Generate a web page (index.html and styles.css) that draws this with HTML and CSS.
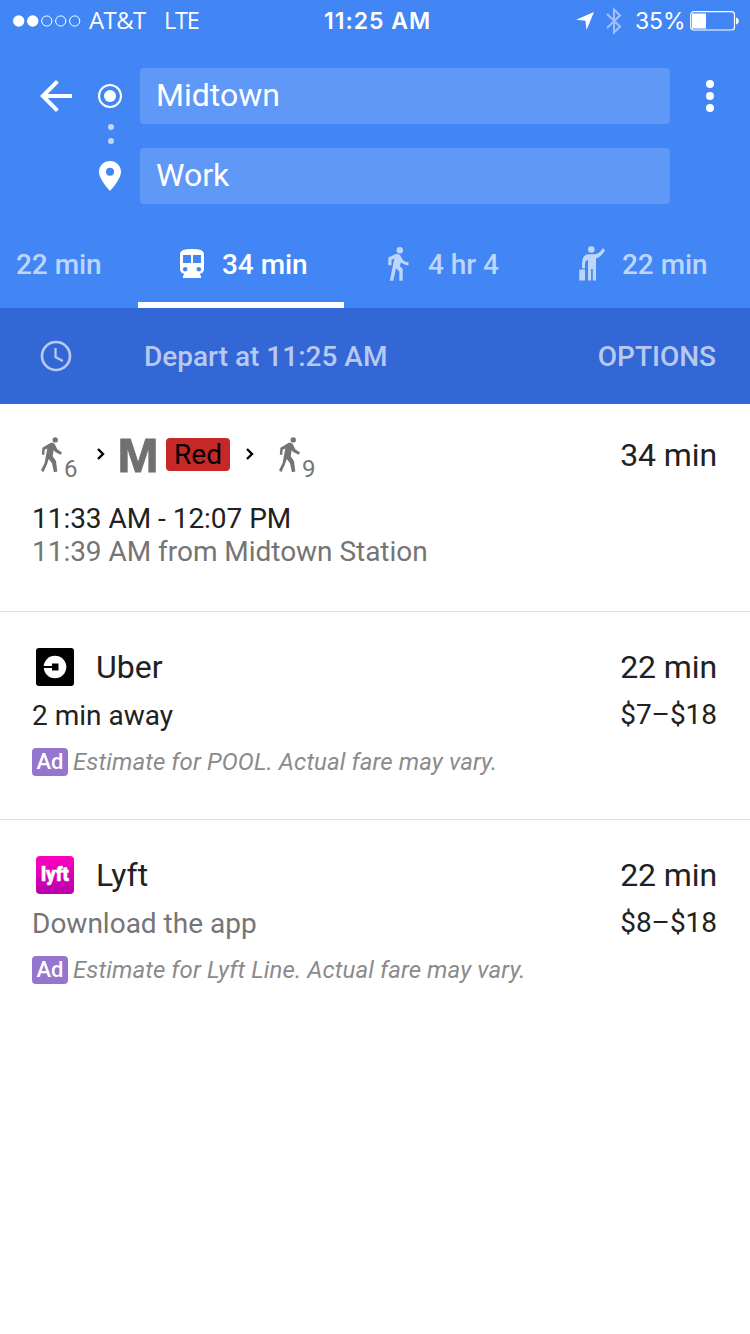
FILE: index.html
```html
<!DOCTYPE html>
<html lang="en">
<head>
<meta charset="utf-8">
<title>Directions</title>
<link rel="stylesheet" href="styles.css">
</head>
<body>
<svg class="defs" width="0" height="0">
  <symbol id="walk" viewBox="0 0 21 36">
    <circle cx="14.200" cy="2.900" r="2.700"/>
    <path d="M9 6.300C10.500 5.400 13 5.900 13.800 7.300L16.300 12.300 21 15.500 19.800 17.700 14.600 15.300 12.700 13.200 11.700 19.200 15 24 16.300 34.500 12.900 35.200 11 26.300 7.700 22 6 27.300 2.400 35.200 0 33.200 3.600 26 6.300 11.500 3.700 12.800 3.300 18 .8 17.500 1.400 10.800Z"/>
  </symbol>
</svg>
<header class="header">
  <div class="status">
    <svg class="signal" width="68" height="12" viewBox="0 0 68 12">
      <g fill="#fff"><circle cx="5.700" cy="6" r="5.700"/><circle cx="19.700" cy="6" r="5.700"/></g>
      <g fill="none" stroke="#fff" stroke-width="1"><circle cx="33.800" cy="6" r="5.100"/><circle cx="47.700" cy="6" r="5.100"/><circle cx="61.700" cy="6" r="5.100"/></g>
    </svg>
    <span class="carrier">AT&amp;T</span>
    <span class="network">LTE</span>
    <span class="time">11:25 AM</span>
    <svg class="location" width="18" height="18" viewBox="0 0 18 18"><path fill="#fff" d="M18 0 10.500 18 9.500 8.800 0 7.700Z"/></svg>
    <svg class="bluetooth" width="16" height="28" viewBox="0 0 16 28"><path fill="none" stroke="#a0c2fa" stroke-width="2" d="M1 7 14 19.500 8 25.500V2.500L14 8.500 1 21"/></svg>
    <span class="percent">35%</span>
    <svg class="battery" width="49" height="20" viewBox="0 0 49 20"><rect x=".7" y=".7" width="43.800" height="18.300" rx="3" fill="none" stroke="#fff" stroke-width="1.200"/><path fill="#fff" d="M2 2.500H16V17.500H2ZM46 6.500C49.700 7 49.700 13 46 13.500Z"/></svg>
  </div>

  <div class="route">
    <svg class="back" width="32" height="32" viewBox="0 0 32 32"><path fill="none" stroke="#fff" stroke-width="4" d="M17.400 1.400 2.800 16 17.400 30.600M2.800 16H32"/></svg>
    <div class="endpoints">
      <svg width="24" height="24" viewBox="0 0 24 24"><circle cx="12" cy="12" r="11" fill="none" stroke="#fff" stroke-width="2"/><circle cx="12" cy="12" r="6" fill="#fff"/></svg>
      <svg class="link-dots" width="8" height="20" viewBox="0 0 8 20"><g fill="#c0d6fc"><circle cx="4" cy="3" r="3"/><circle cx="4" cy="17" r="3"/></g></svg>
      <svg class="pin" width="22" height="30" viewBox="0 0 22 30"><path fill="#fff" fill-rule="evenodd" d="M11 0C4.900 0 0 4.800 0 10.800 0 18.500 11 30 11 30S22 18.500 22 10.800C22 4.800 17.100 0 11 0ZM11 6.700A4 4 0 1 1 11 14.700 4 4 0 0 1 11 6.700Z"/></svg>
    </div>
    <div class="fields">
      <div class="field origin">Midtown</div>
      <div class="field destination">Work</div>
    </div>
    <svg class="more" width="8" height="32" viewBox="0 0 8 32"><g fill="#fff"><circle cx="4" cy="4" r="4"/><circle cx="4" cy="16" r="4"/><circle cx="4" cy="28" r="4"/></g></svg>
  </div>

  <nav class="tabs">
    <div class="tab tab-drive"><span>22 min</span></div>
    <div class="tab tab-transit active">
      <svg width="24" height="29" viewBox="0 0 24 29"><path fill="currentColor" fill-rule="evenodd" d="M0 5.500C0 1 5 0 12 0S24 1 24 5.500V19.500A5.500 5.500 0 0 1 19.500 25L21 27V29H3V27L4.500 25A5.500 5.500 0 0 1 0 19.500ZM3 6H11V14H3ZM13 6H21V14H13ZM5.200 17.900A2.300 2.300 0 1 0 5.200 22.500 2.300 2.300 0 0 0 5.200 17.900ZM18.800 17.900A2.300 2.300 0 1 0 18.800 22.500 2.300 2.300 0 0 0 18.800 17.900Z"/></svg>
      <span>34 min</span>
    </div>
    <div class="tab tab-walk">
      <svg width="21" height="34" viewBox="0 0 21 34"><circle cx="11.800" cy="3.200" r="3.200" fill="currentColor"/><path fill="currentColor" d="M7.300 7.300C9 6.600 11.300 7 12.300 8.500L15 13.300C16.200 14.300 18 15 20.500 15.300V18.400C17 18 14.500 16.800 13 15.200L11.900 19 14.700 22V33.700H11.300V24.500L8 21.300 5.300 33.700H1.800L6.400 11.500 3.500 12.700V18.300H.3V10.500Z"/></svg>
      <span>4 hr 4</span>
    </div>
    <div class="tab tab-ride">
      <svg width="26" height="35" viewBox="0 0 26 35"><circle cx="12.300" cy="3.500" r="3.300" fill="currentColor"/><path fill="currentColor" d="M9 8.300H16C19.500 8 22 5 24 2L26 4.500C23.500 8.500 21 11 17 12.500V34.500H13.800V23H12.100V34.500H9V14C6.500 14.500 6 16 6 21H3C3 13 4 9 9 8.300ZM.3 23.500H6V34.500H.3ZM3 20.500H6V22.200H3Z"/></svg>
      <span>22 min</span>
    </div>
  </nav>
</header>

<div class="depart-bar">
  <svg width="32" height="32" viewBox="0 0 32 32"><g fill="none" stroke="currentColor"><circle cx="16" cy="16" r="14" stroke-width="2.700"/><path stroke-width="2.300" d="M15.500 8V17L22.800 21"/></g></svg>
  <span class="depart">Depart at 11:25 AM</span>
  <span class="options">OPTIONS</span>
</div>

<main>
  <section class="result transit">
    <div class="steps">
      <svg class="walker" width="21" height="36" viewBox="0 0 21 36"><use href="#walk"/></svg>
      <span class="minutes">6</span>
      <svg class="chevron" width="8" height="12" viewBox="0 0 8 12"><path d="M1 1 6 6 1 11"/></svg>
      <svg class="metro" width="44" height="56" viewBox="0 0 44 56"><text x="1.500" y="45" textLength="41" lengthAdjust="spacingAndGlyphs">M</text></svg>
      <span class="line">Red</span>
      <svg class="chevron second" width="8" height="12" viewBox="0 0 8 12"><path d="M1 1 6 6 1 11"/></svg>
      <svg class="walker last" width="21" height="36" viewBox="0 0 21 36"><use href="#walk"/></svg>
      <span class="minutes">9</span>
      <span class="duration">34 min</span>
    </div>
    <div class="schedule">11:33 AM - 12:07 PM</div>
    <div class="station">11:39 AM from Midtown Station</div>
  </section>

  <section class="result service">
    <div class="title-row">
      <svg class="logo" width="38" height="38" viewBox="0 0 38 38"><rect width="38" height="38" rx="3"/><circle cx="19" cy="19" r="11.300" fill="#fff"/><path d="M7 18H16V15.500H22.500V22.500H16V20H7Z"/></svg>
      <span class="name">Uber</span>
      <span class="duration">22 min</span>
    </div>
    <div class="info-row"><span class="wait">2 min away</span><span class="price">$7–$18</span></div>
    <div class="ad-row"><span class="ad">Ad</span><span class="note">Estimate for POOL. Actual fare may vary.</span></div>
  </section>

  <section class="result service">
    <div class="title-row">
      <svg class="logo" width="38" height="38" viewBox="0 0 38 38">
        <defs><linearGradient id="pink" x2="0" y2="1"><stop stop-color="#ff00bf"/><stop offset="1" stop-color="#b800ac"/></linearGradient></defs>
        <rect width="38" height="38" rx="4" fill="url(#pink)"/>
        <text class="lyft" x="5" y="24.500" textLength="28" lengthAdjust="spacingAndGlyphs">lyft</text>
      </svg>
      <span class="name">Lyft</span>
      <span class="duration">22 min</span>
    </div>
    <div class="info-row"><span class="wait muted">Download the app</span><span class="price">$8–$18</span></div>
    <div class="ad-row"><span class="ad">Ad</span><span class="note">Estimate for Lyft Line. Actual fare may vary.</span></div>
  </section>
</main>
</body>
</html>
```

FILE: styles.css
```css
* { box-sizing: border-box; }
body {
  margin: 0;
  width: 750px;
  height: 1334px;
  overflow: hidden;
  background: #fff;
  color: #212121;
  font-family: Roboto, sans-serif;
  white-space: nowrap;
}
svg { display: block; flex: none; }
.defs { display: none; }

.header { height: 308px; background: #4285f5; color: #fff; }

.status {
  display: flex;
  align-items: center;
  height: 68px;
  padding: 0 11px 27px 13px;
  font: 24px/41px Inter, sans-serif;
}
.carrier { width: 76px; padding: 0 0 2px 8px; font-family: "Open Sans", sans-serif; font-size: 24px; letter-spacing: -.6px; }
.network { width: 167px; padding: 0 0 1px 7px; font-family: "Open Sans", sans-serif; font-size: 23.500px; letter-spacing: -1.200px; }
.time { width: 252px; padding-top: 1px; font-weight: 600; font-size: 23px; letter-spacing: 1px; }
.bluetooth { margin-left: 12px; }
.percent { width: 68px; padding: 1px 0 0 13px; font-size: 23px; letter-spacing: -.1px; }

.route { display: flex; height: 152px; padding-left: 40px; }
.back { margin: 12px 26px 0 0; }
.endpoints { display: flex; flex-direction: column; align-items: center; width: 24px; margin: 16px 18px 0 0; }
.link-dots { margin: 16px 0 0 1px; }
.pin { margin-top: 17px; }
.fields { display: flex; flex-direction: column; gap: 24px; width: 530px; }
.field {
  height: 56px;
  padding-left: 16px;
  border-radius: 4px;
  background: #5f98f7;
  font-size: 32px;
  line-height: 55px;
}
.more { margin: 12px 0 0 36px; }

.tabs { display: grid; grid-template-columns: 138px 206px 196px 210px; height: 88px; font-size: 28px; font-weight: 500; }
.tab { display: flex; align-items: center; color: #bed5fc; letter-spacing: -.05px; }
.tab svg { margin-top: -1px; }
.tab-drive { padding-left: 16px; }
.tab-transit { padding: 6px 0 0 42px; gap: 18px; border-bottom: 6px solid #fff; }
.tab-walk { padding-left: 44px; gap: 19px; }
.tab-ride { padding-left: 39px; gap: 17px; }
.tab.active { color: #fff; }

.depart-bar {
  display: flex;
  align-items: center;
  height: 96px;
  padding: 0 34px 0 40px;
  background: #3367d6;
  color: #b8c9f0;
  font-size: 28px;
  font-weight: 500;
}
.depart { margin-left: 72px; }
.options { margin-left: auto; }

.result { height: 208px; border-bottom: 1px solid #e0e0e0; padding: 0 32px; }
.result:last-child { border-bottom: 0; }
.duration { margin: 0 1px 0 auto; font-size: 32px; line-height: 38px; letter-spacing: -.1px; }

.steps { display: flex; align-items: center; height: 102px; padding-left: 9px; }
.walker { fill: #737573; }
.minutes { width: 15px; margin: 28px 0 0 2px; font-size: 24px; line-height: 28px; color: #757575; }
.chevron { margin: -2px 0 0 18px; fill: none; stroke: #000; stroke-width: 2.400; }
.metro { margin: -1px 0 0 11px; fill: #6f716f; font: 900 48px "Liberation Sans", sans-serif; stroke: #6f716f; stroke-width: 1px; }
.line { width: 64px; height: 33px; margin: -1px 0 0 6px; border-radius: 4px; background: #c62828; color: #000; font-size: 28px; line-height: 33px; text-align: center; }
.chevron.second { margin-left: 16px; }
.walker.last { margin-left: 25px; }
.schedule, .station { font-size: 28px; line-height: 33px; letter-spacing: -.03px; }
.schedule { margin-top: -4px; }
.station { color: #757575; }

.service { padding-top: 36px; }
.title-row { display: flex; align-items: center; height: 38px; padding-left: 4px; }
.logo { width: 38px; height: 38px; }
.name { margin-left: 22px; font-size: 32px; }
.lyft { fill: #fff; stroke: #fff; stroke-width: .5px; stroke-linejoin: round; font: 900 19.500px Roboto, sans-serif; }
.info-row { display: flex; justify-content: space-between; height: 33px; margin-top: 12px; font-size: 28px; line-height: 35px; }
.price { padding-right: 1px; line-height: 33px; letter-spacing: -.05px; }
.muted { color: #757575; }
.ad-row { display: flex; margin-top: 17px; }
.ad { width: 36px; height: 28px; border-radius: 4px; background: #9575cd; color: #fff; font-size: 22px; font-weight: 500; line-height: 28px; text-align: center; }
.note { margin-left: 5px; color: #8b8b8b; font-size: 24px; font-style: italic; line-height: 28px; letter-spacing: .1px; }
```
